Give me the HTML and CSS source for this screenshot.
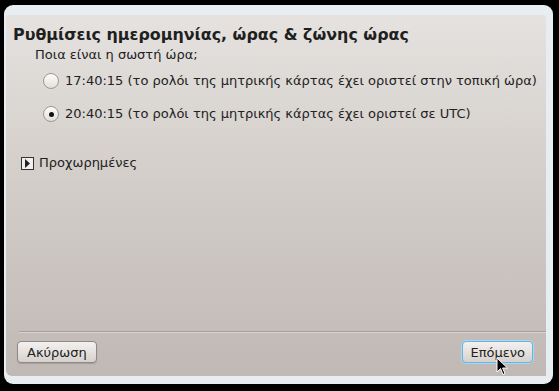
FILE: index.html
```html
<!DOCTYPE html>
<html lang="el">
<head>
    <meta charset="UTF-8">
    <title>Ρυθμίσεις ημερομηνίας, ώρας & ζώνης ώρας</title>
    <link rel="stylesheet" href="styles.css">
</head>
<body>
    <div class="window">
        <div class="frame-top"></div>
        <div class="content">
            <h1 class="title">Ρυθμίσεις ημερομηνίας, ώρας &amp; ζώνης ώρας</h1>
            <div class="question">Ποια είναι η σωστή ώρα;</div>
            <div class="options">
                <label class="option">
                    <span class="radio"></span>
                    <span>17:40:15 (το ρολόι της μητρικής κάρτας έχει οριστεί στην τοπική ώρα)</span>
                </label>
                <label class="option">
                    <span class="radio checked"></span>
                    <span>20:40:15 (το ρολόι της μητρικής κάρτας έχει οριστεί σε UTC)</span>
                </label>
            </div>
            <div class="advanced">
                <span class="expander">
                    <svg width="9" height="9" viewBox="0 0 9 9"><path d="M2 0 L7 4.5 L2 9 Z" fill="#222"/></svg>
                </span>
                <span>Προχωρημένες</span>
            </div>
            <div class="spacer"></div>
            <div class="separator"></div>
            <div class="buttons">
                <button class="btn">Ακύρωση</button>
                <button class="btn focused">Επόμενο</button>
            </div>
        </div>
        <svg class="cursor" width="14" height="20" viewBox="0 0 14 20">
            <path d="M1 1 L1 15 L4.5 11.5 L7 17.5 L9 16.6 L6.6 11 L11.5 11 Z" fill="#000" stroke="#fff" stroke-width="1"/>
        </svg>
    </div>
</body>
</html>
```

FILE: styles.css
```css
body {
    margin: 0;
    background: #000;
    width: 559px;
    height: 391px;
    font-family: "DejaVu Sans", sans-serif;
    font-size: 13px;
    color: #222;
}
.window {
    position: relative;
    margin: 5px 0 0 4px;
    width: 549px;
    height: 379px;
    background: #e8edf2;
    border-radius: 9px;
    display: flex;
    flex-direction: column;
    box-sizing: border-box;
    padding: 0 7px 8px 2px;
}
.frame-top {
    height: 10px;
    flex: none;
}
.content {
    flex: 1;
    display: flex;
    flex-direction: column;
    background: linear-gradient(to bottom, #e5e2df 0%, #d5d0cc 40%, #c0b8b4 100%);
    border-radius: 3px 3px 0 6px;
    padding: 0 0 0 7px;
}
.title {
    margin: 10px 0 0 0;
    font-size: 15.9px;
    font-weight: bold;
    color: #1f1f1f;
    line-height: 20px;
}
.question {
    margin: 2px 0 0 22px;
    line-height: 16px;
}
.options {
    margin: 9px 0 0 30px;
    display: flex;
    flex-direction: column;
    gap: 15px;
}
.option {
    display: flex;
    align-items: center;
    gap: 6px;
    line-height: 18px;
}
.radio {
    width: 16px;
    height: 16px;
    border-radius: 50%;
    border: 1px solid #9c9794;
    background: linear-gradient(to bottom, #fdfdfc, #e2dfdc);
    box-sizing: border-box;
    display: flex;
    align-items: center;
    justify-content: center;
}
.radio.checked::after {
    content: "";
    width: 5px;
    height: 5px;
    border-radius: 50%;
    background: #111;
}
.advanced {
    margin: 32px 0 0 8px;
    display: flex;
    align-items: center;
    gap: 5px;
    line-height: 16px;
}
.expander {
    width: 11px;
    height: 11px;
    border: 1px solid #333;
    background: #f2f0ee;
    display: flex;
    align-items: center;
    justify-content: center;
}
.spacer {
    flex: 1;
}
.separator {
    margin: 0 0 0 6px;
    height: 1px;
    background: #a8a09c;
    border-bottom: 1px solid #d8d2ce;
}
.buttons {
    display: flex;
    justify-content: space-between;
    padding: 8px 13px 13px 4px;
}
.btn {
    font-family: "DejaVu Sans", sans-serif;
    font-size: 13px;
    color: #222;
    height: 22px;
    padding: 0 9px;
    border: 1px solid #8f8884;
    border-radius: 4px;
    background: linear-gradient(to bottom, #f3f1ef, #d6d1cd);
    box-shadow: 0 1px 1px rgba(0,0,0,0.15);
}
.btn.focused {
    border: 1px solid #6bb4e0;
    box-shadow: 0 0 0 1px #a9d6f0;
    padding: 0 7px;
}
.cursor {
    position: absolute;
    left: 492px;
    top: 352px;
}
```
